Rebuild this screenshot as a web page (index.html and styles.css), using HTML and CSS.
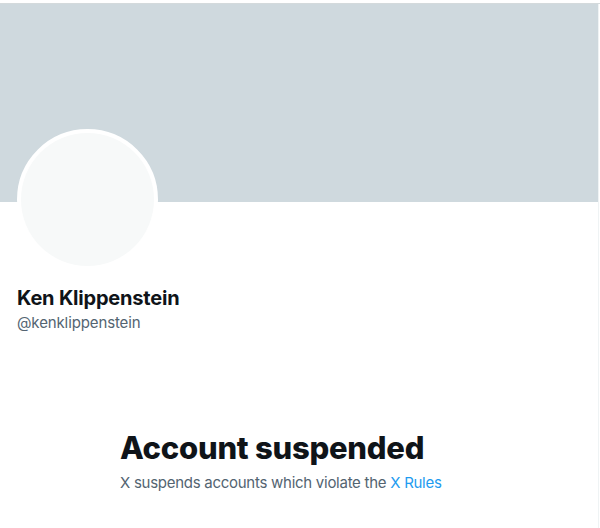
FILE: index.html
```html
<!DOCTYPE html>
<html lang="en">
<head>
<meta charset="utf-8">
<title>Ken Klippenstein</title>
<link rel="stylesheet" href="styles.css">
</head>
<body>
<div class="top-strip"></div>
<main class="column">
  <div class="banner"></div>
  <section class="profile">
    <div class="avatar"><div class="avatar-inner"></div></div>
    <div class="name">Ken Klippenstein</div>
    <div class="handle">@kenklippenstein</div>
  </section>
  <section class="empty">
    <h1 class="empty-title">Account suspended</h1>
    <p class="empty-text">X suspends accounts which violate the <a class="link" href="#">X Rules</a></p>
  </section>
</main>
</body>
</html>
```
FILE: styles.css
```css
html, body {
  margin: 0;
  padding: 0;
  background: #ffffff;
}
body {
  font-family: "Inter", "Liberation Sans", sans-serif;
  color: #0f1419;
  height: 528px;
  overflow: hidden;
}
.top-strip {
  height: 3px;
  background: #ffffff;
  border-bottom: 1px solid #d4dadc;
}
.column {
  width: 598px;
  height: 524px;
  border-right: 1px solid #eff3f4;
}
.banner {
  height: 198px;
  background: #cfd9de;
}
.profile {
  padding: 0 16px;
}
.avatar {
  width: 133px;
  height: 133px;
  margin-top: -73px;
  margin-left: 1px;
  border: 4px solid #ffffff;
  border-radius: 50%;
  background: #ffffff;
}
.avatar-inner {
  width: 100%;
  height: 100%;
  border-radius: 50%;
  background: #f7f9f9;
}
.name {
  margin-top: 16px;
  font-size: 20px;
  line-height: 24px;
  font-weight: 700;
  color: #0f1419;
  padding-left: 1px;
  letter-spacing: -0.2px;
}
.handle {
  margin-top: 3px;
  font-size: 15px;
  line-height: 20px;
  color: #536471;
  padding-left: 1px;
  letter-spacing: -0.12px;
}
.empty {
  padding: 97px 0 0 120px;
}
.empty-title {
  margin: 0;
  font-size: 31px;
  line-height: 36px;
  font-weight: 800;
  color: #0f1419;
  letter-spacing: -0.25px;
}
.empty-text {
  margin: 7px 0 0;
  font-size: 15px;
  line-height: 20px;
  color: #536471;
  letter-spacing: -0.27px;
}
.link {
  color: #1d9bf0;
  text-decoration: none;
}
```
